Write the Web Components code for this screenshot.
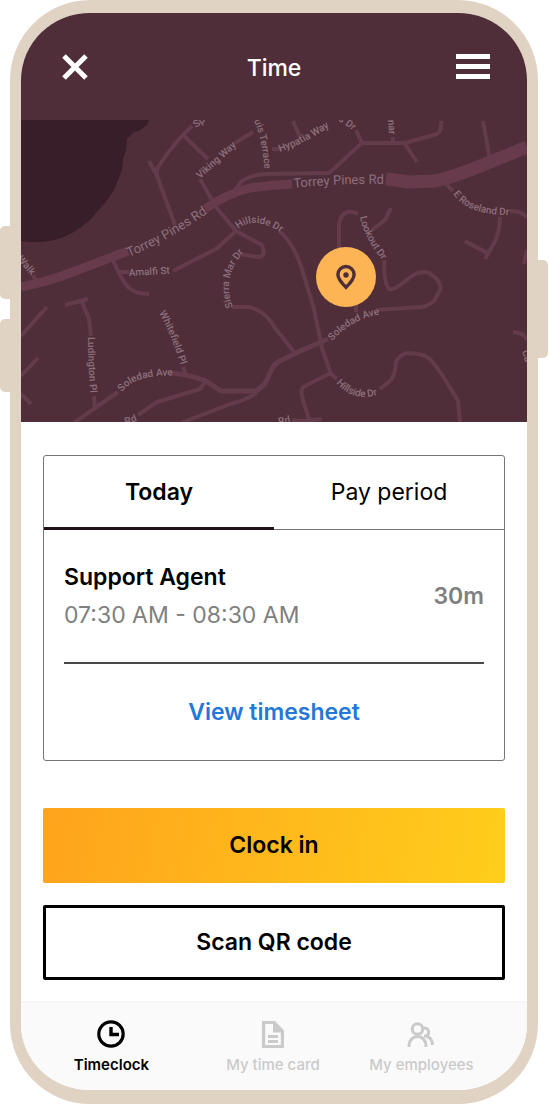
<!DOCTYPE html>
<html lang="en">
<head>
    <meta charset="utf-8">
    <meta name="viewport" content="width=device-width, initial-scale=1">
    <title>Time</title>
    <style>
        body {
            margin: 0;
            background: #fff;
            color: #000;
            font-family: Inter, "Liberation Sans", sans-serif;
            font-size: 23px;
            line-height: 38px;
        }
    </style>
</head>
<body>
    <phone-frame>
        <app-header>Time</app-header>
        <street-map></street-map>
        <app-content>
            <time-card>
                <shift-row duration="30m">
                    Support Agent
                    <span slot="hours">07:30 AM - 08:30 AM</span>
                </shift-row>
            </time-card>
            <action-button variant="primary">Clock in</action-button>
            <action-button variant="outline">Scan QR code</action-button>
        </app-content>
        <bottom-nav>
            <nav-item icon="clock" active>Timeclock</nav-item>
            <nav-item icon="document">My time card</nav-item>
            <nav-item icon="people">My employees</nav-item>
        </bottom-nav>
    </phone-frame>

<script>
class PhoneFrame extends HTMLElement {

    constructor() {
        super();
        this.shadow = this.attachShadow({mode: 'open'});
        this.render()
    }

    render() {
        this.shadow.innerHTML =
        `
            <i class="key volume-up"></i>
            <i class="key volume-down"></i>
            <i class="key power"></i>
            <div class="screen"><slot></slot></div>

            <style>
                :host {
                    display: block;
                    position: relative;
                    padding: 0 11px 0 10px;
                }
                .screen {
                    box-sizing: border-box;
                    display: flex;
                    flex-direction: column;
                    min-height: 100vh;
                    border: solid #e0d3c3;
                    border-width: 13px 11px 14px;
                    border-radius: 80px;
                    overflow: hidden;
                    background: #fff;
                }
                /* hardware keys on the edges of the case */
                .key {
                    position: absolute;
                    width: 11px;
                    background: #e0d3c3;
                }
                .volume-up, .volume-down {
                    left: 0;
                    height: 73px;
                    border-radius: 5px 0 0 5px;
                }
                .volume-up { top: 226px; }
                .volume-down { top: 319px; }
                .power {
                    right: 1px;
                    top: 260px;
                    height: 98px;
                    border-radius: 0 5px 5px 0;
                }
            </style>
        `
    }
}


class AppHeader extends HTMLElement {

    constructor() {
        super();
        this.shadow = this.attachShadow({mode: 'open'});
        this.render()
    }

    render() {
        this.shadow.innerHTML =
        `
            <button type="button" aria-label="Close">
                <svg width="34" height="26" viewBox="0 0 34 26" stroke="#fff" stroke-width="5">
                    <path d="M6 2l22 22M28 2L6 24"/>
                </svg>
            </button>
            <h1><slot></slot></h1>
            <button type="button" aria-label="Menu">
                <svg width="34" height="25" viewBox="0 0 34 25" fill="#fff">
                    <path d="M0 0h34v5H0zM0 10h34v5H0zM0 20h34v5H0z"/>
                </svg>
            </button>

            <style>
                :host {
                    display: grid;
                    grid-template-columns: 1fr auto 1fr;
                    align-items: center;
                    height: 107px;
                    padding: 0 37px;
                    background: #4f2e3a;
                    color: #fff;
                }
                h1 {
                    margin: 0;
                    padding-top: 2px;
                    font-size: 23px;
                    font-weight: 500;
                }
                button {
                    display: flex;
                    padding: 0;
                    border: none;
                    background: none;
                    cursor: pointer;
                }
                button:last-of-type {
                    justify-self: end;
                }
            </style>
        `
    }
}


class StreetMap extends HTMLElement {

    constructor() {
        super();
        this.shadow = this.attachShadow({mode: 'open'});
        this.render()
    }

    render() {
        this.shadow.innerHTML =
        `
            <svg viewBox="21 120 506 302" role="img" aria-label="Map">
                <defs>
                    <path id="torrey-west" d="M129 257Q170 240 215 208"/>
                    <path id="torrey-east" d="M294 188Q340 183 392 184"/>
                    <path id="viking" d="M200 179L242 141"/>
                    <path id="terrace" d="M254 121Q264 142 265 182"/>
                    <path id="hypatia" d="M280 152Q306 143 337 122"/>
                    <path id="drive" d="M338 121Q346 124 360 137"/>
                    <path id="hillside-north" d="M238 229Q256 214 286 236"/>
                    <path id="sierra" d="M233 307Q220 275 248 248"/>
                    <path id="amalfi" d="M129 276L182 273"/>
                    <path id="whitefield" d="M159 313Q172 335 184 376"/>
                    <path id="ludington" d="M88 337Q88 365 91 404"/>
                    <path id="soledad-west" d="M122 392Q136 373 180 376"/>
                    <path id="soledad-east" d="M332 341Q354 317 384 314"/>
                    <path id="lookout" d="M360 217Q363 237 386 265"/>
                    <path id="hillside-south" d="M336 383Q358 407 388 390"/>
                    <path id="roseland" d="M453 194Q469 217 518 215"/>
                </defs>

                <rect x="21" y="120" width="506" height="302" fill="#4f2e3a"/>
                <path class="water" d="M21 120H149L147 125L139 131L134 132L127 139L126 151L123 159L122 170L115 188L108 199L91 219Q72 236 55 240Q36 244 21 241Z"/>

                <g class="street">
                    <path d="M192 126L183 135Q168 151 157 169V176M183 135L208 159M149 161L157 176L175 225"/>
                    <path d="M235 143L253 132M272 149H282M293 121L300 137"/>
                    <path d="M235 190L242 181Q250 175 266 174L329 173L362 143H405L437 134Q442 131 441 121M362 143L356 130M393 143V137M405 144L417 162M483 121L490 160"/>
                    <path d="M200 179L216 207L236 231L262 245L264 253Q263 257 257 257L240 254M236 231L216 249Q200 257 173 271M129 272H118M113 260Q121 279 127 286Q134 294 149 294"/>
                    <path d="M446 184L453 191M510 211Q521 211 527 217M500 217Q500 233 493 245L485 259M465 241L489 254M527 250L524 264M513 332Q525 333 527 340"/>
                    <path d="M21 336L47 307M21 376L38 358M21 394L31 404M65 305L88 299M82 302L89 319L91 336M94 396L95 408M118 392L95 408L74 423M33 275L36 281"/>
                    <path d="M183 367L186 375M206 381L200 389L157 402L138 415M256 393Q247 400 230 404L181 423"/>
                    <path d="M232 307H249Q266 311 275 328L295 353"/>
                    <path d="M279 231Q292 241 301 266L314 309L322 348L331 374L337 379M331 373L303 387Q300 391 303 400L310 422M292 420L302 421L322 419"/>
                    <path d="M380 389L391 380Q395 375 396 362Q400 354 408 353Q422 353 430 359Q440 370 458 401L460 422"/>
                    <path d="M339 248V224Q341 214 347 212Q352 211 358 214M372 230L385 220L391 208M384 260Q384 284 389 289Q394 290 400 285L412 276Q421 270 429 273L437 279Q442 288 440 290L434 301Q428 306 421 307L376 310M356 305V312"/>
                </g>
                <path class="street main" d="M170 373Q187 374 206 381L221 391H256Q266 385 269 375Q274 362 282 360L298 352L328 339"/>
                <path class="street avenue" d="M21 287Q53 280 70 273L128 251M205 209Q226 194 250 188Q270 185 292 184"/>
                <path class="street highway" d="M386 179Q396 180 408 182L434 181Q452 178 490 162L527 147"/>

                <g class="label">
                    <text class="large"><textPath href="#torrey-west">Torrey Pines Rd</textPath></text>
                    <text class="large"><textPath href="#torrey-east">Torrey Pines Rd</textPath></text>
                    <text><textPath href="#viking">Viking Way</textPath></text>
                    <text><textPath href="#terrace">uis Terrace</textPath></text>
                    <text><textPath href="#hypatia">Hypatia Way</textPath></text>
                    <text><textPath href="#drive">s Dr</textPath></text>
                    <text><textPath href="#hillside-north">Hillside Dr</textPath></text>
                    <text><textPath href="#sierra">Sierra Mar Dr</textPath></text>
                    <text><textPath href="#amalfi">Amalfi St</textPath></text>
                    <text><textPath href="#whitefield">Whitefield Pl</textPath></text>
                    <text><textPath href="#ludington">Ludington Pl</textPath></text>
                    <text><textPath href="#soledad-west">Soledad Ave</textPath></text>
                    <text><textPath href="#soledad-east">Soledad Ave</textPath></text>
                    <text><textPath href="#lookout">Lookout Dr</textPath></text>
                    <text><textPath href="#hillside-south">Hillside Dr</textPath></text>
                    <text><textPath href="#roseland">E Roseland Dr</textPath></text>
                    <text transform="translate(196 128) rotate(-35)">Sp</text>
                    <text transform="translate(388 120) rotate(86)">nar</text>
                    <text transform="translate(17 259) rotate(50)">Walk</text>
                    <text transform="translate(126 425) rotate(-20)">Rd</text>
                    <text transform="translate(279 425) rotate(-12)">Rd</text>
                    <text transform="translate(522 351) rotate(75)">Ca</text>
                </g>

                <circle cx="346" cy="277" r="30" fill="#fcb454"/>
                <path d="M346 287.400Q337.900 279.500 337.900 274.600A8.100 8.100 0 0 1 354.100 274.600Q354.100 279.500 346 287.400Z" fill="none" stroke="#4f2e3a" stroke-width="3.400"/>
                <circle cx="346" cy="275" r="2.700" fill="#4f2e3a"/>
            </svg>

            <style>
                :host {
                    display: block;
                    background: #4f2e3a;
                }
                svg {
                    display: block;
                    width: 100%;
                }
                .water { fill: #381e28; }
                .street {
                    fill: none;
                    stroke: #633b4a;
                    stroke-width: 4;
                    stroke-linejoin: round;
                }
                .main { stroke-width: 5; }
                .avenue {
                    stroke: #673b4c;
                    stroke-width: 9;
                }
                .highway {
                    stroke: #673b4c;
                    stroke-width: 13;
                }
                .label {
                    fill: #8e707b;
                    font-family: Roboto, sans-serif;
                    font-size: 10px;
                    font-weight: 500;
                }
                .large {
                    font-size: 13px;
                    font-weight: 400;
                }
            </style>
        `
    }
}


class AppContent extends HTMLElement {

    constructor() {
        super();
        this.shadow = this.attachShadow({mode: 'open'});
        this.render()
    }

    render() {
        this.shadow.innerHTML =
        `
            <main><slot></slot></main>

            <style>
                :host {
                    display: block;
                    flex: 1;
                }
                main {
                    display: flex;
                    flex-direction: column;
                    gap: 22px;
                    padding: 33px 22px 20px;
                }
            </style>
        `
    }
}


class TimeCard extends HTMLElement {

    constructor() {
        super();
        this.shadow = this.attachShadow({mode: 'open'});
        this.render()
    }

    render() {
        this.shadow.innerHTML =
        `
            <div class="tabs" role="tablist">
                <button type="button" role="tab" aria-selected="true">Today</button>
                <button type="button" role="tab" aria-selected="false">Pay period</button>
            </div>
            <div class="panel" role="tabpanel">
                <slot></slot>
                <a href="#timesheet">View timesheet</a>
            </div>

            <style>
                :host {
                    display: block;
                    margin-bottom: 25px;
                    border: 1px solid #757575;
                    border-radius: 3px;
                }
                .tabs {
                    display: grid;
                    grid-template-columns: 1fr 1fr;
                }
                button {
                    box-sizing: border-box;
                    height: 74px;
                    padding: 0 0 2px;
                    border: none;
                    background: none;
                    color: inherit;
                    font: inherit;
                    box-shadow: inset 0 -1px #757575;
                    cursor: pointer;
                }
                button[aria-selected="true"] {
                    font-weight: 600;
                    box-shadow: inset 0 -3px #22101a;
                }
                .panel {
                    padding: 0 20px;
                }
                a {
                    display: block;
                    padding: 29px 0;
                    color: #2478d8;
                    font-weight: 600;
                    text-align: center;
                    text-decoration: none;
                }
            </style>
        `

        this.renderTabs()
    }

    renderTabs = () => {
        const tabs = this.shadow.querySelectorAll('button')
        tabs.forEach((tab) => {
            tab.addEventListener('click', () => {
                tabs.forEach((other) => other.setAttribute('aria-selected', other === tab))
            })
        })
    }
}


class ShiftRow extends HTMLElement {

    constructor() {
        super();
        this.shadow = this.attachShadow({mode: 'open'});
        this.render()
    }

    render() {
        this.shadow.innerHTML =
        `
            <div>
                <div class="role"><slot></slot></div>
                <div class="hours"><slot name="hours"></slot></div>
            </div>
            <div class="duration">${this.getAttribute('duration')}</div>

            <style>
                :host {
                    display: flex;
                    align-items: center;
                    justify-content: space-between;
                    padding: 28px 0;
                    border-bottom: 2px solid #484848;
                }
                .role, .duration {
                    font-weight: 600;
                }
                .hours, .duration {
                    color: #808080;
                }
            </style>
        `
    }
}


class ActionButton extends HTMLElement {

    constructor() {
        super();
        this.shadow = this.attachShadow({mode: 'open'});
        this.render()
    }

    render() {
        this.shadow.innerHTML =
        `
            <button type="button"><slot></slot></button>

            <style>
                :host {
                    display: block;
                }
                button {
                    display: block;
                    box-sizing: border-box;
                    width: 100%;
                    height: 75px;
                    padding: 0 0 2px;
                    border: none;
                    border-radius: 2px;
                    color: inherit;
                    font: inherit;
                    font-weight: 600;
                    cursor: pointer;
                }
                :host([variant="primary"]) button {
                    background: linear-gradient(100deg, #ffa31c, #ffce1b);
                }
                :host([variant="outline"]) button {
                    border: 3px solid #000;
                    background: #fff;
                }
            </style>
        `
    }
}


class BottomNav extends HTMLElement {

    constructor() {
        super();
        this.shadow = this.attachShadow({mode: 'open'});
        this.render()
    }

    render() {
        this.shadow.innerHTML =
        `
            <nav><slot></slot></nav>

            <style>
                :host {
                    display: block;
                    border-top: 2px solid #f4f5f5;
                    background: #fafafa;
                }
                nav {
                    display: grid;
                    grid-template-columns: 14fr 11fr 12fr;
                    padding: 17px 28px 15px 0;
                }
            </style>
        `
    }
}


const navIcons = {
    clock: `
        <circle cx="14" cy="14" r="12.200" fill="none" stroke="currentColor" stroke-width="3.200"/>
        <path d="M14 7v7.500h8" fill="none" stroke="currentColor" stroke-width="3.400"/>
    `,
    document: `
        <path d="M3 1h13l9 9.500V28H3zM6.200 4v21h15.600V12.500H14V4z" fill="currentColor" fill-rule="evenodd"/>
        <path d="M9 15h10v3H9zM9 20h10v3H9z" fill="currentColor"/>
    `,
    people: `
        <g fill="none" stroke="currentColor" stroke-width="3">
            <circle cx="10.500" cy="9" r="5.300"/>
            <path d="M2 27v-1.500a8.500 9 0 0 1 17 0V27"/>
            <path d="M16 8.500a4 4 0 1 1 1 7.500M19.500 16.500q6 1.500 6 8.500"/>
        </g>
    `
}


class NavItem extends HTMLElement {

    constructor() {
        super();
        this.shadow = this.attachShadow({mode: 'open'});
        this.render()
    }

    render() {
        this.shadow.innerHTML =
        `
            <a href="#${this.getAttribute('icon')}">
                <svg width="28" height="28" viewBox="0 0 28 28">${navIcons[this.getAttribute('icon')]}</svg>
                <span><slot></slot></span>
            </a>

            <style>
                :host {
                    display: block;
                    color: #cacaca;
                }
                :host([active]) {
                    color: #000;
                }
                a {
                    display: flex;
                    flex-direction: column;
                    align-items: center;
                    gap: 7px;
                    color: inherit;
                    font-size: 15px;
                    font-weight: 500;
                    line-height: 20px;
                    text-decoration: none;
                    white-space: nowrap;
                }
                :host([active]) a {
                    font-weight: 600;
                }
            </style>
        `
    }
}


customElements.define('phone-frame', PhoneFrame);
customElements.define('app-header', AppHeader);
customElements.define('street-map', StreetMap);
customElements.define('app-content', AppContent);
customElements.define('time-card', TimeCard);
customElements.define('shift-row', ShiftRow);
customElements.define('action-button', ActionButton);
customElements.define('bottom-nav', BottomNav);
customElements.define('nav-item', NavItem);
</script>
</body>
</html>
